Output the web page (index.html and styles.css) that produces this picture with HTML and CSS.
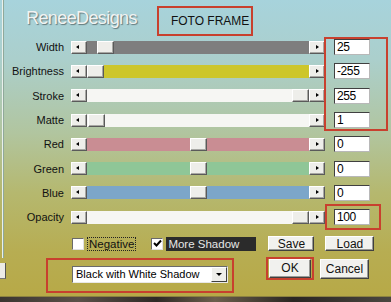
FILE: index.html
```html
<!DOCTYPE html>
<html lang="en">
  <head>
    <meta charset="UTF-8" />
    <title>Foto Frame</title>
    <link rel="stylesheet" href="styles.css">
  </head>
  <body>
    <div class="screen">
      <!-- ventana de atrás -->
      <div class="side">
        <div class="side-line"></div>
        <div class="side-btn"></div>
      </div>

      <div class="dialog">
        <div class="header">
          <span class="brand">ReneeDesigns</span>
          <span class="title">FOTO FRAME</span>
        </div>

        <div class="rows">
          <div class="row">
            <label>Width</label>
            <div class="slider">
              <span class="arrow left"></span>
              <div class="track gray"><span class="thumb" style="margin-left:10px"></span></div>
              <span class="arrow right"></span>
            </div>
            <input type="text" value="25" />
          </div>
          <div class="row">
            <label>Brightness</label>
            <div class="slider">
              <span class="arrow left"></span>
              <div class="track yellow"><span class="thumb" style="margin-left:0px"></span></div>
              <span class="arrow right"></span>
            </div>
            <input type="text" value="-255" />
          </div>
          <div class="row">
            <label>Stroke</label>
            <div class="slider">
              <span class="arrow left"></span>
              <div class="track white"><span class="thumb" style="margin-left:205px"></span></div>
              <span class="arrow right"></span>
            </div>
            <input type="text" value="255" />
          </div>
          <div class="row">
            <label>Matte</label>
            <div class="slider">
              <span class="arrow left"></span>
              <div class="track white"><span class="thumb" style="margin-left:1px"></span></div>
              <span class="arrow right"></span>
            </div>
            <input type="text" value="1" />
          </div>
          <div class="row">
            <label>Red</label>
            <div class="slider">
              <span class="arrow left"></span>
              <div class="track red"><span class="thumb" style="margin-left:103px"></span></div>
              <span class="arrow right"></span>
            </div>
            <input type="text" value="0" />
          </div>
          <div class="row">
            <label>Green</label>
            <div class="slider">
              <span class="arrow left"></span>
              <div class="track green"><span class="thumb" style="margin-left:103px"></span></div>
              <span class="arrow right"></span>
            </div>
            <input type="text" value="0" />
          </div>
          <div class="row">
            <label>Blue</label>
            <div class="slider">
              <span class="arrow left"></span>
              <div class="track blue"><span class="thumb" style="margin-left:103px"></span></div>
              <span class="arrow right"></span>
            </div>
            <input type="text" value="0" />
          </div>
          <div class="row">
            <label>Opacity</label>
            <div class="slider">
              <span class="arrow left"></span>
              <div class="track white"><span class="thumb" style="margin-left:205px"></span></div>
              <span class="arrow right"></span>
            </div>
            <input type="text" value="100" />
          </div>
        </div>

        <div class="options">
          <span class="check first"></span>
          <span class="check-label focus">Negative</span>
          <span class="check checked">
            <svg width="9" height="9" viewBox="0 0 9 9"><path d="M1 4 L3.5 6.5 L8 1.5" fill="none" stroke="#000" stroke-width="2"/></svg>
          </span>
          <span class="check-label selected">More Shadow</span>
          <button class="btn save">Save</button>
          <button class="btn load">Load</button>
        </div>

        <div class="actions">
          <div class="combo">
            <span class="combo-text">Black with White Shadow</span>
            <span class="combo-btn"></span>
          </div>
          <button class="btn ok">OK</button>
          <button class="btn cancel">Cancel</button>
        </div>
      </div>

      <!-- marcas rojas -->
      <div class="mark mark-values"></div>
      <div class="mark mark-opacity"></div>
      <div class="mark mark-combo"></div>
      <div class="mark mark-ok"></div>
    </div>
    <div class="photo-strip"></div>
  </body>
</html>
```
FILE: styles.css
```css
body {
  margin: 0;
  font-family: "Liberation Sans", Arial, sans-serif;
  width: 391px;
  height: 302px;
  overflow: hidden;
}

.screen {
  position: relative;
  display: flex;
  height: 296px;
  background: linear-gradient(180deg, #a7d3dc 0%, #abcfcc 20%, #b1c59f 45%, #b5b86f 65%, #b7ad52 85%, #b7a947 100%);
  border-bottom: 1px solid #8c8240;
}

.side {
  width: 6px;
  display: flex;
  flex-direction: column;
}

.side-line {
  height: 258px;
  width: 2px;
  margin-left: 2px;
  border-left: 1px solid #e9f0ec;
  border-right: 1px solid #8fa89a;
  box-sizing: border-box;
}

.side-btn {
  margin-top: 5px;
  height: 15px;
  width: 5px;
  background: #ecebe6;
  border-right: 1px solid #555;
  border-bottom: 1px solid #777;
}

.dialog {
  flex: 1;
}

.header {
  display: flex;
  align-items: flex-start;
  height: 35px;
}

.brand {
  margin: 8px 0 0 20px;
  font-size: 18px;
  letter-spacing: -0.6px;
  color: #f1f3f2;
  text-shadow: 1px 1px 1px #62777a;
}

.title {
  margin: 6px 0 0 20px;
  width: 96px;
  height: 30px;
  box-sizing: border-box;
  border: 2px solid #c8402e;
  font-size: 12px;
  line-height: 26px;
  padding-left: 12px;
  color: #111;
}

.rows {
  display: grid;
  grid-auto-rows: 24.3px;
}

.row {
  display: flex;
  align-items: center;
}

label {
  width: 58px;
  margin-right: 7px;
  text-align: right;
  font-size: 11px;
  color: #111;
}

.slider {
  width: 254px;
  height: 13px;
  display: flex;
}

.arrow,
.thumb {
  width: 16px;
  height: 13px;
  box-sizing: border-box;
  background: #eeeeea;
  border: 1px solid;
  border-color: #fff #5a5a5a #5a5a5a #fff;
  box-shadow: inset -1px -1px #a8a8a4;
  flex: none;
  position: relative;
}

.arrow::after {
  content: "";
  position: absolute;
  top: 3px;
  left: 5px;
  border: 2.5px solid transparent;
}

.arrow.left::after {
  left: 4px;
  border-right: 3px solid #000;
  border-left-width: 0;
}

.arrow.right::after {
  left: 6px;
  border-left: 3px solid #000;
  border-right-width: 0;
}

.track {
  flex: 1;
  display: flex;
}

.thumb {
  width: 17px;
}

.gray { background: #7e7e7e; }
.yellow { background: #cdc62b; }
.white { background: #f6f6f3; }
.red { background: #c98d93; }
.green { background: #8fc697; }
.blue { background: #7ca6c9; }

input {
  margin-left: 9px;
  width: 36px;
  height: 16px;
  box-sizing: border-box;
  padding: 0 0 0 2px;
  border: 1px solid;
  border-color: #404040 #b8b8b8 #b8b8b8 #404040;
  background: #fff;
  font-family: "Liberation Sans", Arial, sans-serif;
  font-size: 12px;
  letter-spacing: -0.4px;
  color: #000;
}

.options {
  display: flex;
  align-items: center;
  height: 14px;
  margin-top: 7.6px;
}

.check {
  width: 12px;
  height: 12px;
  box-sizing: border-box;
  background: #fff;
  border: 1px solid;
  border-color: #6a6a6a #e0e0e0 #e0e0e0 #6a6a6a;
  display: flex;
  align-items: center;
  justify-content: center;
}

.check.first {
  margin-left: 66px;
}

.check.checked {
  margin-left: 15px;
}

.check-label {
  font-size: 11.5px;
  line-height: 13px;
  height: 14px;
  box-sizing: border-box;
}

.check-label.focus {
  margin-left: 3px;
  padding: 0 1px;
  border: 1px dotted #222;
  color: #111;
}

.check-label.selected {
  margin-left: 3px;
  width: 90px;
  padding: 1px 0 0 2px;
  background: #2b2b2b;
  color: #e6e6e6;
}

.btn {
  height: 15px;
  box-sizing: border-box;
  padding: 0;
  background: #f1f1ee;
  border: 1px solid;
  border-color: #fff #404040 #404040 #fff;
  box-shadow: inset -1px -1px #9a9a96;
  font-family: "Liberation Sans", Arial, sans-serif;
  font-size: 12px;
  color: #111;
}

.btn.save {
  margin-left: 12px;
  width: 46px;
}

.btn.load {
  margin-left: 11px;
  width: 49px;
}

.actions {
  display: flex;
  align-items: flex-start;
  margin-top: 8px;
  height: 25px;
}

.combo {
  margin: 7px 0 0 66px;
  width: 156px;
  height: 17px;
  box-sizing: border-box;
  display: flex;
  background: #fff;
  border: 1px solid;
  border-color: #6a6a6a #e8e8e8 #e8e8e8 #6a6a6a;
}

.combo-text {
  flex: 1;
  padding-left: 3px;
  font-size: 11px;
  line-height: 15px;
  color: #000;
}

.combo-btn {
  width: 16px;
  height: 15px;
  box-sizing: border-box;
  background: #eeeeea;
  border: 1px solid;
  border-color: #fff #404040 #404040 #fff;
  position: relative;
}

.combo-btn::after {
  content: "";
  position: absolute;
  left: 4px;
  top: 5px;
  border: 3px solid transparent;
  border-top: 3px solid #000;
  border-bottom-width: 0;
}

.btn.ok {
  margin-left: 41px;
  width: 42px;
  height: 19px;
}

.btn.cancel {
  margin-left: 9px;
  width: 49px;
  height: 20px;
}

.mark {
  position: absolute;
  border: 2px solid #c8402e;
  box-sizing: border-box;
}

.mark-values {
  left: 324px;
  top: 37px;
  width: 64px;
  height: 94px;
}

.mark-opacity {
  left: 325px;
  top: 204px;
  width: 56px;
  height: 26px;
}

.mark-combo {
  left: 46px;
  top: 258px;
  width: 188px;
  height: 35px;
}

.mark-ok {
  left: 266px;
  top: 257px;
  width: 48px;
  height: 23px;
}

.photo-strip {
  height: 5px;
  background: linear-gradient(90deg, #3a3530 0%, #5a5048 20%, #2e2a26 40%, #6b5f4c 55%, #2a2622 75%, #4a4640 100%);
}
```
